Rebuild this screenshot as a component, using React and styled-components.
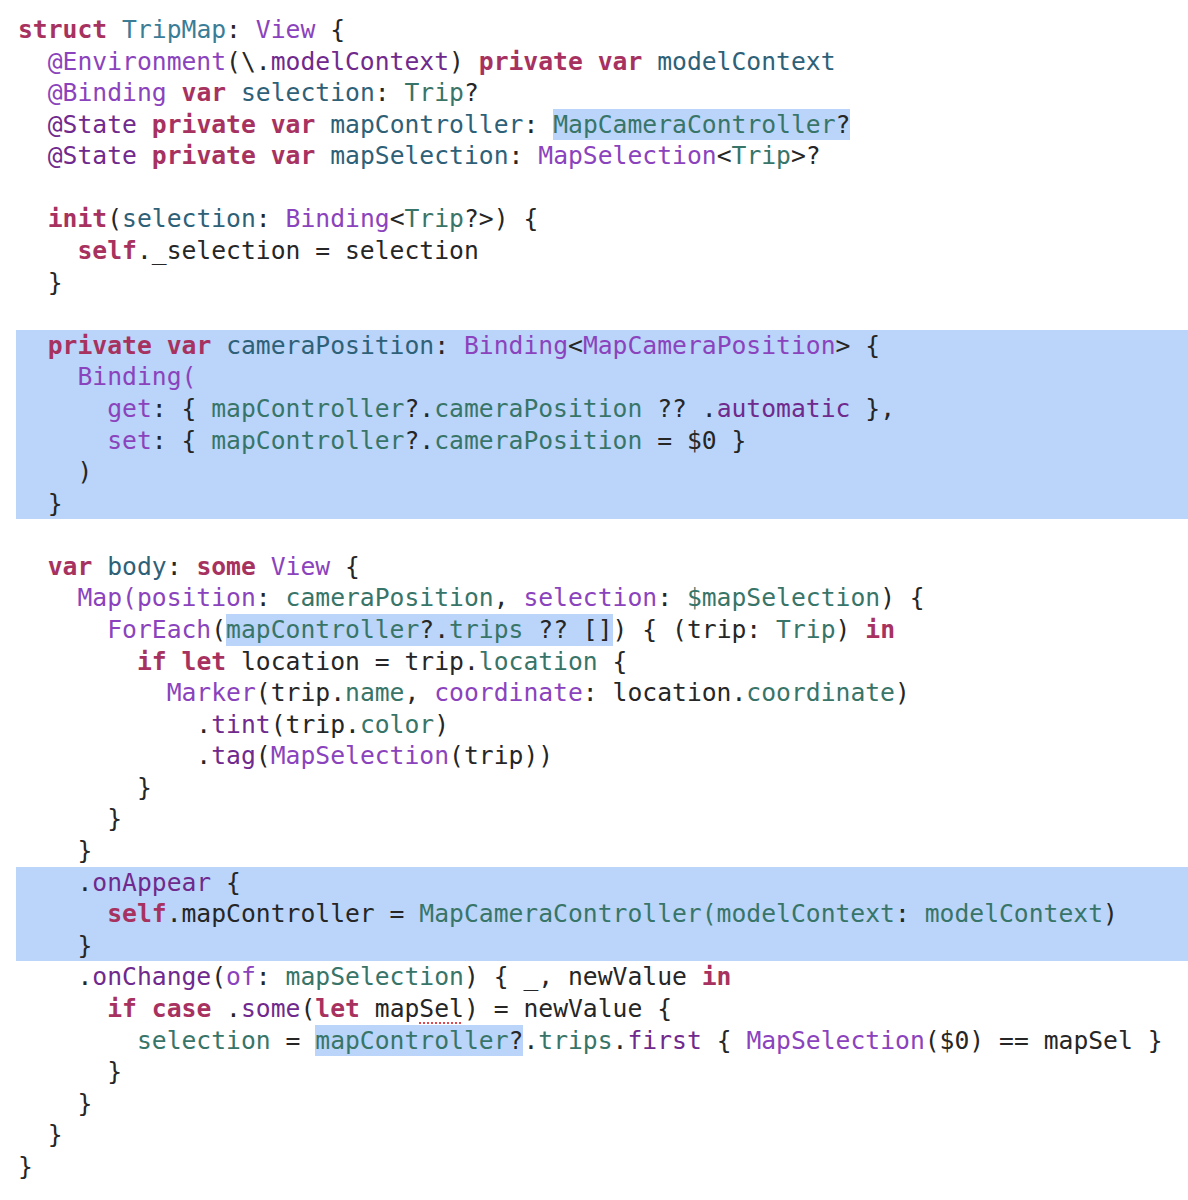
import styled, { createGlobalStyle } from "styled-components";

const LINE = 31.58;

const colors = {
  plain: "#262626",
  k: "#a7325f",
  t: "#3b7d97",
  d: "#2e6178",
  p: "#8b43bd",
  m: "#70298d",
  g: "#387568",
  s: "#262626",
};

// «kind:text» marks a coloured token, ⟦ ... ⟧ marks an inline selection
const source = [
  ["«k:struct» «t:TripMap»: «p:View» {"],
  ["  «p:@Environment»(\\.«m:modelContext») «k:private» «k:var» «d:modelContext»"],
  ["  «p:@Binding» «k:var» «d:selection»: «g:Trip»?"],
  ["  «m:@State» «k:private» «k:var» «d:mapController»: ⟦«g:MapCameraController»?⟧"],
  ["  «m:@State» «k:private» «k:var» «d:mapSelection»: «p:MapSelection»<«g:Trip»>?"],
  [""],
  ["  «k:init»(«d:selection»: «p:Binding»<«g:Trip»?>) {"],
  ["    «k:self»._selection = selection"],
  ["  }"],
  [""],
  ["  «k:private» «k:var» «d:cameraPosition»: «p:Binding»<«p:MapCameraPosition»> {", true],
  ["    «p:Binding(»", true],
  ["      «p:get»: { «g:mapController»?.«g:cameraPosition» ?? .«m:automatic» },", true],
  ["      «p:set»: { «g:mapController»?.«g:cameraPosition» = $0 }", true],
  ["    )", true],
  ["  }", true],
  [""],
  ["  «k:var» «d:body»: «k:some» «p:View» {"],
  ["    «p:Map(position»: «g:cameraPosition», «p:selection»: «g:$mapSelection») {"],
  ["      «p:ForEach»(⟦«g:mapController»?.«g:trips» ?? []⟧) { (trip: «g:Trip») «k:in»"],
  ["        «k:if» «k:let» location = trip.«g:location» {"],
  ["          «p:Marker»(trip.«g:name», «p:coordinate»: location.«g:coordinate»)"],
  ["            .«m:tint»(trip.«g:color»)"],
  ["            .«m:tag»(«p:MapSelection»(trip))"],
  ["        }"],
  ["      }"],
  ["    }"],
  ["    .«m:onAppear» {", true],
  ["      «k:self».mapController = «g:MapCameraController(modelContext»: «g:modelContext»)", true],
  ["    }", true],
  ["    .«m:onChange»(«p:of»: «g:mapSelection») { _, newValue «k:in»"],
  ["      «k:if» «k:case» .«m:some»(«k:let» map«s:Sel») = newValue {"],
  ["        «g:selection» = ⟦«g:mapController»?⟧.«g:trips».«m:first» { «p:MapSelection»($0) == mapSel }"],
  ["      }"],
  ["    }"],
  ["  }"],
  ["}"],
];

const GlobalStyle = createGlobalStyle`
  html, body {
    margin: 0;
    padding: 0;
    background: #ffffff;
  }
`;

const Page = styled.div`
  width: 1188px;
  height: 1200px;
  box-sizing: border-box;
  padding: 14px 0 0 16px;
  background: #ffffff;
  overflow: hidden;
`;

const Line = styled.div`
  height: ${LINE}px;
  line-height: ${LINE}px;
  padding-left: 2px;
  white-space: pre;
  font-family: "DejaVu Sans Mono", "Liberation Mono", monospace;
  font-size: 24.7px;
  color: ${colors.plain};
  background: ${(p) => (p.$band ? "#bad5f9" : "transparent")};
`;

const Token = styled.span`
  color: ${(p) => colors[p.$kind]};
  font-weight: ${(p) => (p.$kind === "k" ? 700 : 400)};
  text-decoration: ${(p) => (p.$kind === "s" ? "underline dotted #e0484f" : "none")};
  text-decoration-thickness: 2px;
  text-underline-offset: 6px;
`;

const Mark = styled.span`
  display: inline-block;
  height: ${LINE}px;
  vertical-align: top;
  background: #bad5f9;
`;

const parseTokens = (text, keyBase) => {
  const out = [];
  const re = /«(\w):(.*?)»/g;
  let last = 0;
  let m;
  let i = 0;
  while ((m = re.exec(text))) {
    if (m.index > last) out.push(<span key={keyBase + i++}>{text.slice(last, m.index)}</span>);
    out.push(
      <Token key={keyBase + i++} $kind={m[1]}>
        {m[2]}
      </Token>
    );
    last = re.lastIndex;
  }
  if (last < text.length) out.push(<span key={keyBase + i++}>{text.slice(last)}</span>);
  return out;
};

const renderLine = (text) => {
  const parts = text.split(/(⟦.*?⟧)/);
  return parts.map((part, i) =>
    part.startsWith("⟦") ? (
      <Mark key={i}>{parseTokens(part.slice(1, -1), `m${i}-`)}</Mark>
    ) : (
      parseTokens(part, `p${i}-`)
    )
  );
};

export default function App() {
  return (
    <>
      <GlobalStyle />
      <Page>
        {source.map(([text, band], i) => (
          <Line key={i} $band={band}>
            {text === "" ? " " : renderLine(text)}
          </Line>
        ))}
      </Page>
    </>
  );
}
